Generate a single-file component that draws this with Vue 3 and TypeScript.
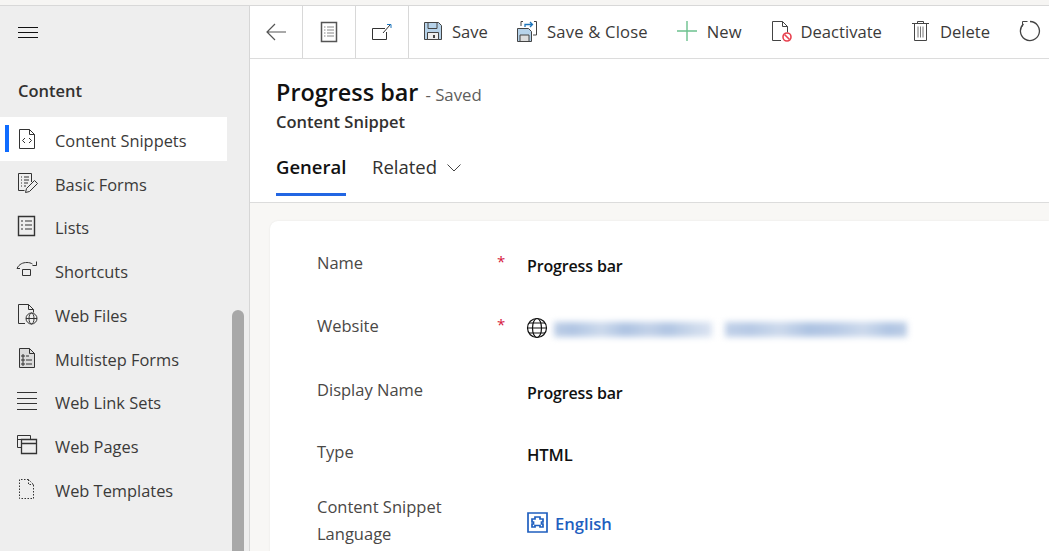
<script setup lang="ts">
const navItems = [
  { label: 'Content Snippets', icon: 'snippet', active: true },
  { label: 'Basic Forms', icon: 'forms' },
  { label: 'Lists', icon: 'lists' },
  { label: 'Shortcuts', icon: 'shortcut' },
  { label: 'Web Files', icon: 'files' },
  { label: 'Multistep Forms', icon: 'multistep' },
  { label: 'Web Link Sets', icon: 'links' },
  { label: 'Web Pages', icon: 'pages' },
  { label: 'Web Templates', icon: 'templates' },
]
</script>

<template>
  <div class="page">
    <div class="topstrip"></div>
    <div class="shell">
      <aside class="side">
        <div class="burger">
          <svg width="20" height="12" viewBox="0 0 20 12"><path d="M0 .5h20M0 5.500h20M0 10.500h20" stroke="#111" fill="none" /></svg>
        </div>
        <div class="group">Content</div>
        <nav class="nav">
          <a v-for="it in navItems" :key="it.label" class="nav-item" :class="{ active: it.active }">
            <span class="nav-icon">
              <svg width="22" height="22" viewBox="0 0 22 22" fill="none" stroke="#333" stroke-width="1">
                <template v-if="it.icon === 'snippet'">
                  <path d="M3.500 1.500h10l5 5v14h-15zM13.500 1.500v5h5" />
                  <path d="M9 10l-2.500 2.500L9 15M13 10l2.500 2.500L13 15" />
                </template>
                <template v-else-if="it.icon === 'forms'">
                  <path d="M15.500 10V1.500h-13v17h6" />
                  <path d="M5 5h1M8 5h5M5 8h1M8 8h5M5 11h1M8 11h4M5 14h1M8 14h2" />
                  <path d="M9.500 20.500l1-4 8-8 3 3-8 8z" />
                </template>
                <template v-else-if="it.icon === 'lists'">
                  <path d="M2.500 1.500h16v19h-16z" stroke-width="1.400" />
                  <path d="M5 6h2M9 6h7M5 10h2M9 10h7M5 14h2M9 14h7" />
                </template>
                <template v-else-if="it.icon === 'shortcut'">
                  <path d="M1 9.500C3 5 7 3.500 11 3.500c2 0 4 .5 5.500 1.500M20.500 2.500v4h-4" />
                  <path d="M1 9.500h3M6.500 10.500h8v6h-8z" />
                </template>
                <template v-else-if="it.icon === 'files'">
                  <path d="M9 20.500H2.500v-19h10l5 5v3M12.500 1.500v5h5" />
                  <circle cx="15.500" cy="15.500" r="5.500" />
                  <ellipse cx="15.500" cy="15.500" rx="2.500" ry="5.500" />
                  <path d="M10 15.500h11" />
                </template>
                <template v-else-if="it.icon === 'multistep'">
                  <path d="M3.500 1.500h10l5 5v14h-15z" fill="#dcdcdc" />
                  <path d="M13.500 1.500v5h5" />
                  <path d="M6 8h2v2H6zM6 12h2v2H6zM6 16h2v2H6zM10 13h6M10 17h6M10 9h3" />
                </template>
                <template v-else-if="it.icon === 'links'">
                  <path d="M1 2.500h20M1 8.500h20M1 13.500h20M1 19.500h20" stroke-width="1.200" />
                </template>
                <template v-else-if="it.icon === 'pages'">
                  <path d="M1.500 1.500h13v12h-13zM1.500 5.500h13" />
                  <path d="M5.500 5.500h15v14h-15zM5.500 9.500h15" fill="#eee" stroke-width="1.300" />
                </template>
                <template v-else>
                  <path d="M12.500 1.500H3.500v19h14V6.500zM12.500 1.500v5h5" stroke-dasharray="1.500 1.500" />
                </template>
              </svg>
            </span>
            <span class="nav-label">{{ it.label }}</span>
          </a>
        </nav>
        <div class="group next">Security</div>
        <div class="thumb"></div>
      </aside>

      <main class="main">
        <div class="toolbar">
          <button class="tb-square" aria-label="Back">
            <svg width="20" height="18" viewBox="0 0 20 18" fill="none" stroke="#555" stroke-width="1.200"><path d="M1 9h19M9 1L1 9l8 8" /></svg>
          </button>
          <button class="tb-square" aria-label="Form">
            <svg width="18" height="22" viewBox="0 0 18 22" fill="none" stroke="#555"><path d="M1.500 1.500h15v19h-15z" stroke-width="1.500" /><path d="M4 6h1.500M7 6h7M4 9h1.500M7 9h7M4 12h1.500M7 12h7M4 15h1.500M7 15h7" stroke="#888" /></svg>
          </button>
          <button class="tb-square" aria-label="Open">
            <svg width="22" height="20" viewBox="0 0 22 20" fill="none" stroke="#333"><path d="M14 6.500H1.500v11h14V10" /><path d="M12 11l7-8" /><path d="M16 2.500h4V6" stroke="#1c75bc" /></svg>
          </button>
          <div class="tb-cmd cmd-save">
            <svg width="18" height="18" viewBox="0 0 18 18"><path d="M.5.500h14l3 3v14H.5z" fill="#b7d3ea" stroke="#444" /><path d="M4 .500h9v6H4z" fill="#b7d3ea" stroke="#444" /><path d="M3.500 10.500h11v7h-11z" fill="#eee" stroke="#444" /><path d="M9 13h2v3H9z" fill="#444" /></svg>
            <span>Save</span>
          </div>
          <div class="tb-cmd cmd-close">
            <svg width="20" height="21" viewBox="0 0 20 21" fill="none"><path d="M.5 7.500h11l3 3v10H.5z" fill="#b7d3ea" stroke="#444" /><path d="M3 14h9v6.500H3z" fill="#ddd" stroke="#444" /><path d="M4 5V.5h2M17 .5h2.500V14H16" stroke="#444" /><path d="M8 6V3.500h7M13 1l2.500 2.500L13 6" stroke="#1c75bc" stroke-width="1.300" /></svg>
            <span class="sc-label">Save &amp; Close</span>
          </div>
          <div class="tb-cmd cmd-new">
            <svg width="20" height="20" viewBox="0 0 20 20"><path d="M0 10h20M10 0v20" stroke="#6cc18e" stroke-width="1.400" /></svg>
            <span>New</span>
          </div>
          <div class="tb-cmd cmd-deact">
            <svg width="20" height="21" viewBox="0 0 20 21" fill="none"><path d="M9 19.500H.5V.5h10l5 5v6M10.500.5v5h5" stroke="#444" /><circle cx="15" cy="16" r="4" fill="#fff" stroke="#e8414f" stroke-width="1.600" /><path d="M12.500 13.500l5 5" stroke="#e8414f" stroke-width="1.600" /></svg>
            <span>Deactivate</span>
          </div>
          <div class="tb-cmd cmd-del">
            <svg width="17" height="20" viewBox="0 0 17 20" fill="none" stroke="#444"><path d="M0 2.500h17M5.500 2.500V.5h6v2M2.500 2.500v17h12v-17" /><path d="M6 5.500v11M8.500 5.500v11M11 5.500v11" stroke="#777" /></svg>
            <span>Delete</span>
          </div>
          <div class="tb-refresh">
            <svg width="22" height="22" viewBox="0 0 22 22" fill="none" stroke="#444" stroke-width="1.300"><path d="M4.500 4a9.500 9.500 0 1 0 6.500-2.500" /><path d="M3.500 6.500V1.500H8.500" stroke-width="1" /></svg>
          </div>
        </div>

        <header class="head">
          <div class="title-row">
            <h1>Progress bar</h1>
            <span class="saved">- Saved</span>
          </div>
          <div class="entity">Content Snippet</div>
          <div class="tabs">
            <div class="tab current">General</div>
            <div class="tab">
              Related
              <svg width="14" height="8" viewBox="0 0 14 8" fill="none" stroke="#444"><path d="M.5.500L7 7l6.500-6.500" /></svg>
            </div>
          </div>
        </header>

        <section class="body">
          <div class="card">
            <div class="row r-name">
              <div class="lbl">Name</div><div class="req">*</div>
              <div class="val">Progress bar</div>
            </div>
            <div class="row r-web">
              <div class="lbl">Website</div><div class="req">*</div>
              <div class="val web">
                <svg width="22" height="22" viewBox="0 0 22 22" fill="none" stroke="#111" stroke-width="1.200"><circle cx="11" cy="11" r="9.500" /><ellipse cx="11" cy="11" rx="4.500" ry="9.500" /><path d="M1.500 11h19M3 6h16M3 16h16" /></svg>
                <span class="blur one"></span>
                <span class="blur two"></span>
              </div>
            </div>
            <div class="row r-display">
              <div class="lbl">Display Name</div><div class="req"></div>
              <div class="val">Progress bar</div>
            </div>
            <div class="row r-type">
              <div class="lbl">Type</div><div class="req"></div>
              <div class="val">HTML</div>
            </div>
            <div class="row r-lang">
              <div class="lbl">Content Snippet<br />Language</div><div class="req"></div>
              <div class="val link">
                <svg width="21" height="21" viewBox="0 0 21 21" fill="none" stroke="#1f5fbf" stroke-width="1.700"><path d="M1 1h19v19H1z" /><path d="M8 5h5v2h3v3h-1.500v2H16v3h-3v-1.500H8V15H5v-3h1.500v-2H5V7h3z" /></svg>
                <span>English</span>
              </div>
            </div>
          </div>
        </section>
      </main>
    </div>
  </div>
</template>

<style>
html, body { margin: 0; height: 100%; overflow: hidden; background: #fff; }
</style>

<style scoped>
.page {
  width: 1049px;
  height: 551px;
  overflow: hidden;
  display: flex;
  flex-direction: column;
  font-family: "Open Sans", "Noto Sans", sans-serif;
  color: #323130;
}
.topstrip {
  height: 5px;
  background: #f6f5f3;
  border-bottom: 1px solid #d8d8d8;
  flex: none;
}
.shell { flex: 1; display: flex; min-height: 0; }

.side {
  position: relative;
  width: 250px;
  flex: none;
  background: #eeeeee;
  border-right: 1px solid #d6d6d6;
  box-sizing: border-box;
  overflow: hidden;
}
.burger { height: 12px; padding: 21px 0 0 18px; line-height: 0; }
.group {
  margin: 41px 0 0 18px;
  font-size: 16.500px;
  font-weight: 600;
  line-height: 22px;
}
.group.next { margin-top: 35px; }
.nav { margin-top: 15px; }
.nav-item {
  position: relative;
  display: flex;
  align-items: center;
  width: 227px;
  height: 43.750px;
  font-size: 16.400px;
  color: #3b3a39;
}
.nav-label { padding-top: 3px; }
.nav-item.active { background: #fff; }
.nav-item.active::before {
  content: "";
  position: absolute;
  left: 5px;
  top: 8px;
  width: 4px;
  height: 27px;
  background: #0f6cff;
}
.nav-icon { width: 55px; padding-left: 16px; box-sizing: border-box; line-height: 0; flex: none; }
.thumb {
  position: absolute;
  left: 232px;
  top: 304px;
  width: 12px;
  height: 300px;
  border-radius: 6px;
  background: #a8a8a8;
}

.main { flex: 1; min-width: 0; display: flex; flex-direction: column; }
.toolbar {
  height: 52px;
  flex: none;
  display: flex;
  align-items: center;
  border-bottom: 1px solid #dcdcdc;
  overflow: hidden;
}
.tb-square {
  width: 53px;
  height: 52px;
  flex: none;
  padding: 0;
  display: flex;
  align-items: center;
  justify-content: center;
  background: #fff;
  border: 0;
  border-right: 1px solid #d8d8d8;
}
.tb-cmd {
  display: flex;
  align-items: center;
  flex: none;
  font-size: 16.600px;
  color: #3b3a39;
  margin-top: -2px;
}
.sc-label { letter-spacing: .2px; }
.cmd-save { margin-left: 15px; gap: 10px; }
.cmd-close { margin-left: 29px; gap: 10px; }
.cmd-new { margin-left: 29px; gap: 10px; }
.cmd-deact { margin-left: 30px; gap: 9px; }
.cmd-del { margin-left: 30px; gap: 11px; }
.tb-refresh { margin-left: 29px; margin-top: -2px; line-height: 0; flex: none; }

.head { padding: 15px 0 0 26px; height: 144px; box-sizing: border-box; border-bottom: 1px solid #dcdcdc; flex: none; }
.title-row { display: flex; align-items: baseline; gap: 7px; height: 36px; }
h1 { margin: 0; font-size: 23.400px; font-weight: 600; line-height: 36px; color: #111; }
.saved { font-size: 16.800px; color: #605e5c; }
.entity { font-size: 16.500px; font-weight: 600; line-height: 22px; margin-top: 1px; }
.tabs { display: flex; margin-top: 18px; }
.tab {
  height: 45px;
  padding-top: 3px;
  box-sizing: border-box;
  font-size: 18.500px;
  line-height: 26px;
  display: flex;
  gap: 10px;
  align-items: flex-start;
}
.tab svg { margin-top: 10px; }
.tab.current {
  font-weight: 600;
  color: #111;
  margin-right: 26px;
  border-bottom: 3px solid #2266e3;
  width: 70px;
}

.body { flex: 1; min-height: 0; background: #f8f7f5; padding: 18px 0 0 20px; }
.card {
  background: #fff;
  height: 400px;
  border-radius: 8px 0 0 0;
  box-shadow: 0 0 2px rgba(0,0,0,.08);
  padding-left: 47px;
}
.row { display: grid; grid-template-columns: 180px 30px 1fr; }
.lbl { font-size: 16.500px; line-height: 27px; color: #4a4846; margin-top: -1px; }
.req { color: #d6183d; font-size: 15px; line-height: 24px; }
.val {
  font-size: 16px;
  font-weight: 600;
  color: #111;
  line-height: 24px;
  letter-spacing: -.15px;
}
.r-name { padding-top: 28px; height: 35px; }
.r-name .lbl, .r-web .lbl { margin-top: 0; }
.r-name .val { padding-top: 5px; }
.r-display .val { padding-top: 4px; }
.r-type .val { padding-top: 4px; font-size: 16.600px; }
.r-web { padding-top: 28px; height: 36px; }
.web { display: flex; align-items: center; height: 24px; position: relative; margin-top: 4px; }
.web svg { flex: none; margin-left: -1px; }
.blur {
  display: block;
  height: 15px;
  margin-top: 3px;
  filter: blur(3px);
}
.blur.one {
  width: 158px;
  margin-left: 6px;
  background: linear-gradient(90deg, #bccde6 0%, #b0c5e3 12%, #ccd9ec 30%, #adc3e2 45%, #c2d1e8 60%, #b0c5e3 72%, #c8d6ea 86%, #dbe4f2 100%);
}
.blur.two {
  width: 182px;
  margin-left: 13px;
  background: linear-gradient(90deg, #c0d0e8 0%, #b6c9e5 14%, #ccd9ec 30%, #adc3e2 46%, #b6c9e5 60%, #ccd9ec 76%, #b0c5e3 90%, #bccde6 100%);
}
.r-display { padding-top: 29px; height: 33px; }
.r-type { padding-top: 29px; height: 33px; }
.r-lang { padding-top: 22px; }
.link {
  display: flex;
  align-items: center;
  gap: 7px;
  color: #1f5fbf;
  height: 54px;
  margin-top: 3px;
  font-size: 16.600px;
  letter-spacing: 0;
}
.link svg { margin-top: -3px; }
</style>
